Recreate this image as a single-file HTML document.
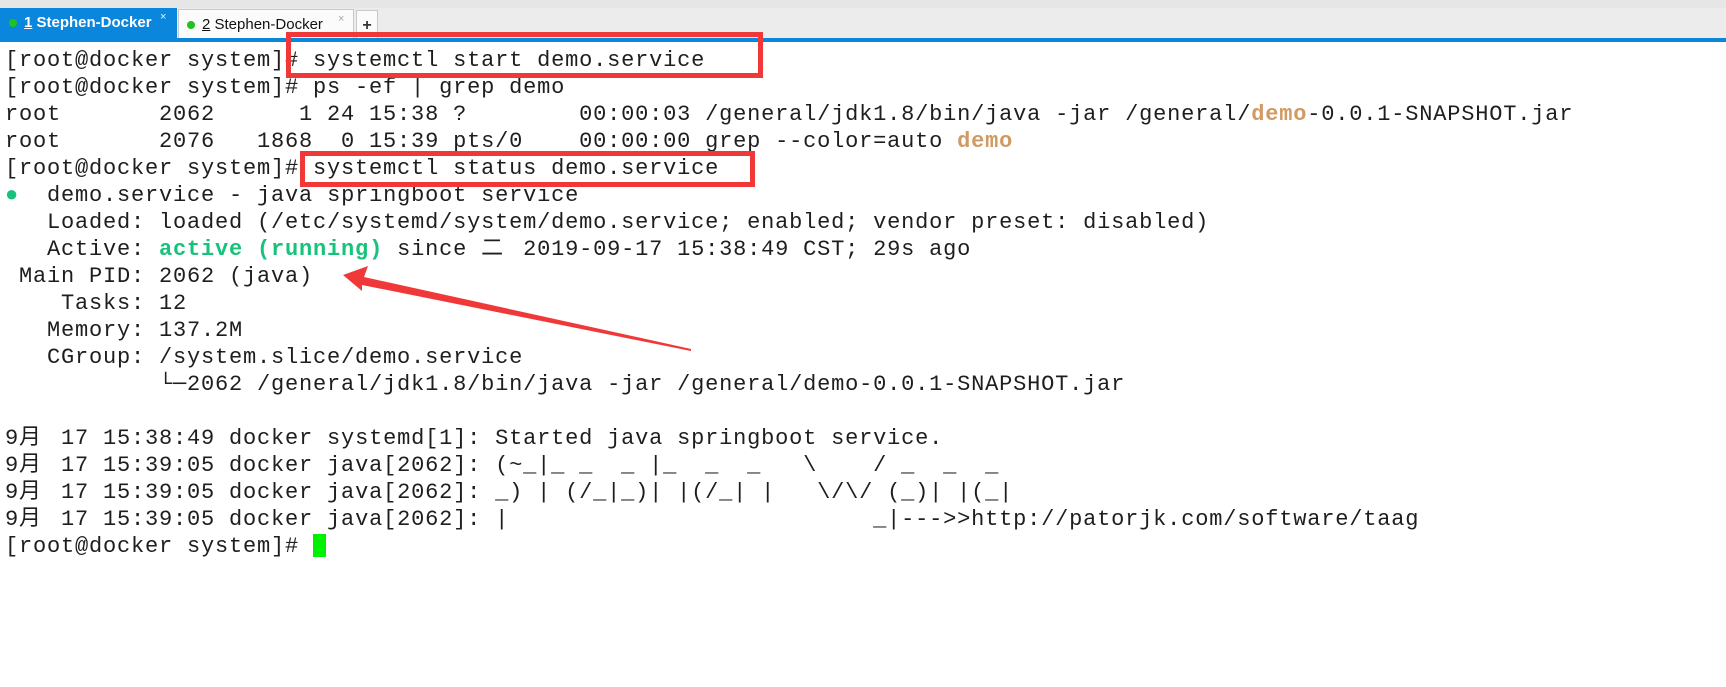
<!DOCTYPE html>
<html><head><meta charset="utf-8"><style>
html,body{margin:0;padding:0;background:#fff;width:1726px;height:687px;overflow:hidden;position:relative}
.top{position:absolute;left:0;top:0;width:1726px;height:9px;background:#e6e6e6}
.bar{position:absolute;left:0;top:8px;width:1726px;height:30px;background:#ececec}
.blue{position:absolute;left:0;top:38px;width:1726px;height:4px;background:#0a86dc}
.tab{position:absolute;top:8px;height:30px;font-family:"Liberation Sans",sans-serif;font-size:15px;line-height:30px;box-sizing:border-box}
.t1{left:0;width:177px;background:#0a86dc;color:#fff;font-weight:bold}
.t2{left:178px;top:9px;height:29px;width:176px;background:#fbfbfb;border:1px solid #c8c8c8;border-bottom:none;color:#111}
.t3{left:356px;top:10px;height:28px;width:22px;background:#fbfbfb;border:1px solid #c8c8c8;border-bottom:none;color:#333;font-weight:bold;text-align:center;font-size:16px}
.dot{position:absolute;width:8px;height:8px;border-radius:50%;background:#1fc21f;top:11px}
.x{position:absolute;top:-6px;font-size:11px;font-weight:normal}
pre{position:absolute;left:5px;top:47px;margin:0;font-family:"Liberation Mono","Noto Sans CJK SC",monospace;font-size:22px;letter-spacing:0.8px;line-height:27px;color:#1e1e1e}
.cj{display:inline-block;width:28px;letter-spacing:0;text-align:left}
.g{color:#17c27a;font-weight:bold}
.o{color:#d29a63;font-weight:bold}
.gd{color:#17c27a}
.cur{display:inline-block;width:13px;height:23px;background:#00f000;vertical-align:-5px}
.box{position:absolute;border:5px solid #f03838;box-sizing:border-box}
</style></head><body>
<div class="top"></div><div class="bar"></div><div class="blue"></div>
<div class="tab t1"><span class="dot" style="left:9px"></span><span style="position:absolute;left:24px"><u>1</u> Stephen-Docker</span><span class="x" style="left:160px;color:#dfe">×</span></div>
<div class="tab t2"><span class="dot" style="left:8px"></span><span style="position:absolute;left:23px"><u>2</u> Stephen-Docker</span><span class="x" style="left:159px;color:#aaa">×</span></div>
<div class="tab t3">+</div>
<pre>[root@docker system]# systemctl start demo.service
[root@docker system]# ps -ef | grep demo
root       2062      1 24 15:38 ?        00:00:03 /general/jdk1.8/bin/java -jar /general/<span class="o">demo</span>-0.0.1-SNAPSHOT.jar
root       2076   1868  0 15:39 pts/0    00:00:00 grep --color=auto <span class="o">demo</span>
[root@docker system]# systemctl status demo.service
<span class="gd">●</span>  demo.service - java springboot service
   Loaded: loaded (/etc/systemd/system/demo.service; enabled; vendor preset: disabled)
   Active: <span class="g">active (running)</span> since <span class="cj">二</span> 2019-09-17 15:38:49 CST; 29s ago
 Main PID: 2062 (java)
    Tasks: 12
   Memory: 137.2M
   CGroup: /system.slice/demo.service
           └─2062 /general/jdk1.8/bin/java -jar /general/demo-0.0.1-SNAPSHOT.jar

9<span class="cj">月</span> 17 15:38:49 docker systemd[1]: Started java springboot service.
9<span class="cj">月</span> 17 15:39:05 docker java[2062]: (~_|_ _  _ |_  _  _   \    / _  _  _
9<span class="cj">月</span> 17 15:39:05 docker java[2062]: _) | (/_|_)| |(/_| |   \/\/ (_)| |(_|
9<span class="cj">月</span> 17 15:39:05 docker java[2062]: |                          _|---&gt;&gt;http://patorjk.com/software/taag
[root@docker system]# <span class="cur"></span></pre>
<div class="box" style="left:286px;top:32px;width:477px;height:46px"></div>
<div class="box" style="left:300px;top:151px;width:455px;height:36px"></div>
<svg style="position:absolute;left:0;top:0" width="1726" height="687">
<polygon points="343,275 368,266 364,277 691,349 691,351 362,285 362,291" fill="#f03838"/>
</svg>
</body></html>
